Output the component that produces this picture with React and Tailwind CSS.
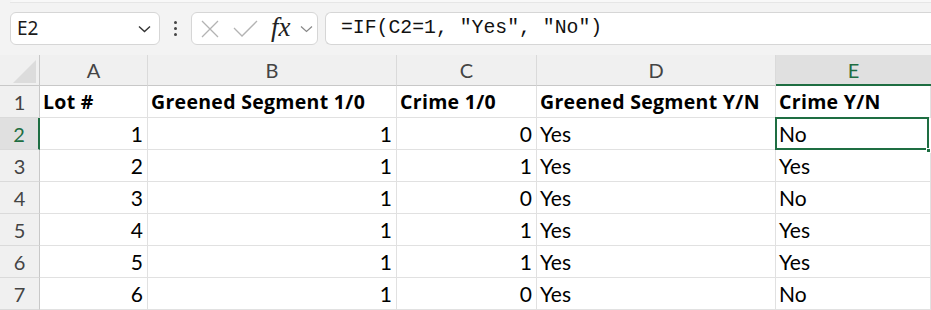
import React from "react";

const rows = [
  ["1", "1", "0", "Yes", "No"],
  ["2", "1", "1", "Yes", "Yes"],
  ["3", "1", "0", "Yes", "No"],
  ["4", "1", "1", "Yes", "Yes"],
  ["5", "1", "1", "Yes", "Yes"],
  ["6", "1", "0", "Yes", "No"],
];

const cellFont = { fontFamily: "Lato, 'Noto Sans', sans-serif" };
const boldFont = { fontFamily: "'Open Sans', 'Noto Sans', sans-serif", letterSpacing: "0.3px" };

export default function App() {
  return (
    <div className="w-[931px] h-[310px] overflow-hidden bg-white" style={cellFont}>
      {/* toolbar */}
      <div className="h-[55px] bg-[#f3f3f3] relative flex items-start pt-[12px]">
        <div className="absolute left-[10px] right-0 top-0 h-[3px] bg-[#f8f8f8] rounded-tl-[4px] border-b border-[#e6e6e6]" />
        <div className="ml-[10px] w-[150px] h-[33px] bg-white border border-[#d6d6d6] rounded-[6px] flex items-center pl-[6px] pr-[8px]">
          <span className="text-[19px] text-[#1b1b1b] flex-1" style={{ fontFamily: "'Noto Sans', sans-serif" }}>E2</span>
          <svg width="13" height="8" viewBox="0 0 13 8"><path d="M1 1.5 L6.5 6.5 L12 1.5" fill="none" stroke="#333" strokeWidth="1.4" /></svg>
        </div>
        <div className="w-[31px] h-[33px] flex flex-col items-center justify-center gap-[3px]">
          <div className="w-[3px] h-[3px] bg-[#444] rounded-full" />
          <div className="w-[3px] h-[3px] bg-[#444] rounded-full" />
          <div className="w-[3px] h-[3px] bg-[#444] rounded-full" />
        </div>
        <div className="w-[127px] h-[33px] bg-white border border-[#d6d6d6] rounded-[6px] flex items-center pl-[9px]">
          <svg width="18" height="18" viewBox="0 0 18 18"><path d="M1 1 L17 17 M17 1 L1 17" stroke="#b3b3b3" strokeWidth="1.3" /></svg>
          <svg className="ml-[14px]" width="25" height="17" viewBox="0 0 25 17"><path d="M1 8 L9 16 L24 1" fill="none" stroke="#b3b3b3" strokeWidth="1.3" /></svg>
          <span className="ml-[13px] text-[27px] italic text-[#222] leading-none -mt-[3px]" style={{ fontFamily: "'Liberation Serif', serif" }}>fx</span>
          <svg className="ml-[9px]" width="13" height="8" viewBox="0 0 13 8"><path d="M1 1.5 L6.5 6.5 L12 1.5" fill="none" stroke="#888" strokeWidth="1.2" /></svg>
        </div>
        <div className="ml-[7px] flex-1 h-[33px] bg-white border border-[#d6d6d6] border-r-0 rounded-l-[6px] flex items-center pl-[15px]">
          <span className="text-[19.8px] text-[#111] whitespace-pre" style={{ fontFamily: "'Liberation Mono', monospace" }}>=IF(C2=1, "Yes", "No")</span>
        </div>
      </div>

      {/* grid */}
      <div className="grid grid-cols-[40px_108px_249px_140px_239px_1fr]">
        {/* header row */}
        <div className="h-[31px] bg-[#f0f0f0] border-r border-b border-[#c8c8c8] relative">
          <svg className="absolute left-[13px] top-[5px]" width="23" height="23" viewBox="0 0 23 23"><path d="M23 0 L23 23 L0 23 Z" fill="#dcdcdc" /></svg>
        </div>
        {["A", "B", "C", "D"].map((c) => (
          <div key={c} className="h-[31px] bg-[#f0f0f0] border-r border-b border-[#c8c8c8] border-r-[#dadada] flex items-center justify-center text-[20px] text-[#444]">
            {c}
          </div>
        ))}
        <div className="h-[31px] bg-[#e0e0e0] border-b-2 border-[#1e6e42] flex items-center justify-center text-[20px] text-[#1e6e42]">
          E
        </div>

        {/* row 1 */}
        <div className="h-[32px] bg-[#f0f0f0] border-r border-b border-[#c8c8c8] border-b-[#dadada] flex items-center justify-center text-[20px] text-[#444]">1</div>
        {["Lot #", "Greened Segment 1/0", "Crime 1/0", "Greened Segment Y/N", "Crime Y/N"].map((t, i) => (
          <div key={i} className="h-[32px] border-r border-b border-[#e1e1e1] flex items-center pl-[3px] text-[19.5px] font-bold text-black whitespace-nowrap overflow-hidden" style={boldFont}>
            {t}
          </div>
        ))}

        {rows.map((r, ri) => {
          const sel = ri === 0;
          return (
            <React.Fragment key={ri}>
              <div
                className={
                  "h-[32px] border-b border-[#dadada] flex items-center justify-center text-[20px] " +
                  (sel ? "bg-[#e0e0e0] border-r-2 border-r-[#1e6e42] text-[#1e6e42]" : "bg-[#f0f0f0] border-r border-r-[#c8c8c8] text-[#444]")
                }
              >
                {ri + 2}
              </div>
              {r.map((v, ci) => {
                const right = ci < 3;
                if (sel && ci === 4) {
                  return (
                    <div key={ci} className="h-[32px] relative flex items-center pl-[3px] text-[21px] text-black">
                      <div className="absolute left-[-1px] top-[-1px] right-[2px] bottom-0 border-2 border-[#1e6e42]" />
                      <div className="absolute right-0 bottom-[-3px] w-[5px] h-[5px] bg-[#1e6e42] border border-white" />
                      {v}
                    </div>
                  );
                }
                return (
                  <div
                    key={ci}
                    className={
                      "h-[32px] border-r border-b border-[#e1e1e1] flex items-center text-[21px] text-black " +
                      (right ? "justify-end pr-[4px]" : "pl-[3px]")
                    }
                  >
                    {v}
                  </div>
                );
              })}
            </React.Fragment>
          );
        })}
      </div>
    </div>
  );
}
